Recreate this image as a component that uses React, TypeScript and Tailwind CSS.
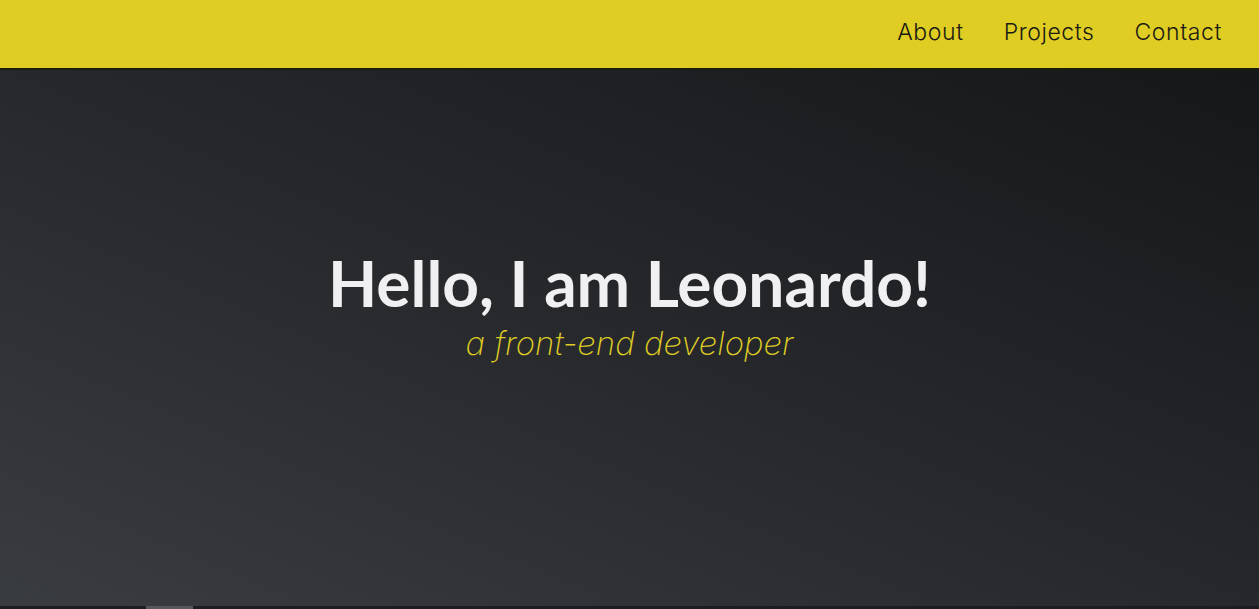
export default function App() {
  const links = ['About', 'Projects', 'Contact'];

  return (
    <div className="min-h-screen flex flex-col bg-[#17181a]">
      <header className="h-[70px] bg-[#dfcd24] border-b-2 border-[#1e1c0c] flex items-center justify-end pr-[37px] shrink-0">
        <nav className="flex gap-[40px] font-['Inter',sans-serif] text-[23px] text-[#1a1a12] font-light tracking-[0.6px] pb-[4px]">
          {links.map((l) => (
            <a key={l} href={'#' + l.toLowerCase()} className="leading-none">
              {l}
            </a>
          ))}
        </nav>
      </header>

      <section className="h-[536px] bg-gradient-to-tr from-[#393c40] via-[#27282c] to-[#161719] flex flex-col items-center justify-center pb-[64px]">
        <h1 className="font-['Lato',sans-serif] font-bold text-[64px] leading-[1.1] text-[#f0f0f2]">
          Hello, I am Leonardo!
        </h1>
        <p className="font-['Inter',sans-serif] italic font-extralight text-[33px] leading-[1.2] text-[#dfcd24] mt-[6px]">
          a front-end developer
        </p>
      </section>

      <div className="h-[3px] flex bg-[#1c1d20]">
        <div className="w-[146px]" />
        <div className="w-[47px] bg-[#55575b]" />
      </div>
    </div>
  );
}
